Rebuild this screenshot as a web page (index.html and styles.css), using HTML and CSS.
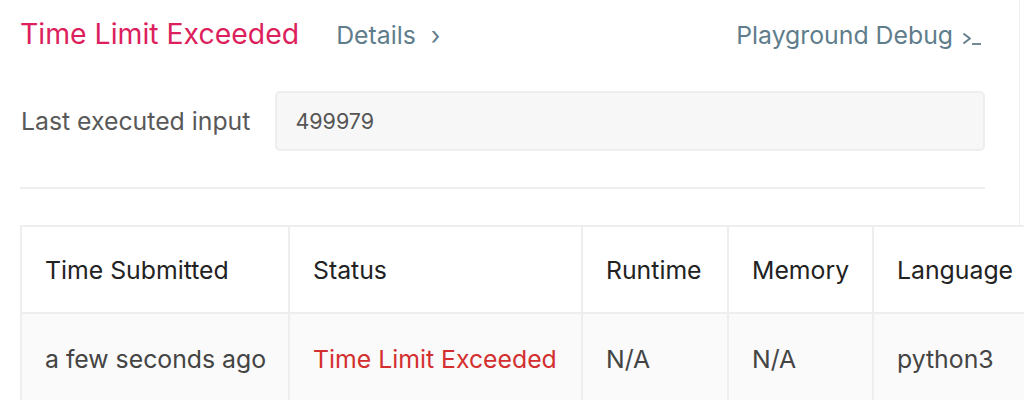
FILE: index.html
```html
<!DOCTYPE html>
<html lang="en">
<head>
<meta charset="utf-8">
<title>Submission result</title>
<link rel="stylesheet" href="styles.css">
</head>
<body>
<div class="frame">
  <div class="page">
    <div class="result-head">
      <div class="result-left">
        <span class="status-title">Time Limit Exceeded</span>
        <a class="details-link" href="#">Details <span class="chev">›</span></a>
      </div>
      <a class="playground-link" href="#">Playground Debug
        <svg class="term-icon" width="20" height="16" viewBox="0 0 20 16" aria-hidden="true">
          <polyline points="2,4 8,8.5 2,13" fill="none" stroke="currentColor" stroke-width="1.8" stroke-linecap="round" stroke-linejoin="round"/>
          <line x1="10" y1="14" x2="19" y2="14" stroke="currentColor" stroke-width="1.8"/>
        </svg>
      </a>
    </div>
    <div class="last-input">
      <span class="last-input-label">Last executed input</span>
      <div class="input-box">499979</div>
    </div>
    <hr class="divider">
    <table class="subs">
      <thead>
        <tr>
          <th class="c1">Time Submitted</th>
          <th class="c2">Status</th>
          <th class="c3">Runtime</th>
          <th class="c4">Memory</th>
          <th class="c5">Language</th>
        </tr>
      </thead>
      <tbody>
        <tr>
          <td>a few seconds ago</td>
          <td class="tle">Time Limit Exceeded</td>
          <td>N/A</td>
          <td>N/A</td>
          <td>python3</td>
        </tr>
      </tbody>
    </table>
  </div>
</div>
</body>
</html>
```
FILE: styles.css
```css
html, body {
  margin: 0;
  padding: 0;
  background: #ffffff;
  overflow: hidden;
}
body {
  font-family: Inter, "Liberation Sans", sans-serif;
  color: #333;
}
.frame {
  width: 1019px;
  height: 400px;
  border-right: 1px solid #eeeeee;
}
.page {
  width: 965px;
  padding-left: 20px;
  padding-top: 18px;
}
.result-head {
  display: flex;
  align-items: baseline;
  justify-content: space-between;
}
.result-left {
  display: flex;
  align-items: baseline;
  gap: 37px;
}
.status-title {
  font-size: 28.4px;
  line-height: 32px;
  color: #dc1f5d;
}
.details-link,
.playground-link {
  font-size: 24.8px;
  line-height: 32px;
  color: #607d8b;
  text-decoration: none;
}
.chev {
  margin-left: 8px;
}
.playground-link {
  display: flex;
  align-items: baseline;
  gap: 9px;
  margin-right: 3px;
}
.term-icon {
  align-self: center;
  position: relative;
  top: 3px;
}
.last-input {
  display: flex;
  align-items: center;
  gap: 25px;
  margin-top: 40px;
}
.last-input-label {
  font-size: 24.8px;
  color: #595959;
  padding-left: 1px;
}
.input-box {
  flex: 1;
  height: 60px;
  box-sizing: border-box;
  background: #f7f7f7;
  border: 2px solid #eeeeee;
  border-radius: 5px;
  padding: 0 18px;
  display: flex;
  align-items: center;
  font-size: 21.5px;
  color: #555;
}
.divider {
  margin: 36px 0 0 0;
  border: 0;
  height: 2px;
  background: #eeeeee;
}
.subs {
  margin-top: 36px;
  border-collapse: separate;
  border-spacing: 0;
  table-layout: fixed;
  width: 1034px;
  border-top: 2px solid #eeeeee;
  border-left: 2px solid #eeeeee;
  background: #ffffff;
}
.subs th,
.subs td {
  box-sizing: border-box;
  border-right: 2px solid #eeeeee;
  border-bottom: 2px solid #eeeeee;
  padding: 0 0 0 23px;
  text-align: left;
  vertical-align: middle;
  font-size: 24.8px;
  white-space: nowrap;
}
.subs th {
  height: 87px;
  font-weight: normal;
  color: #222;
}
.subs td {
  height: 92px;
  background: #fafafa;
  color: #444;
}
.subs .c1 { width: 268px; }
.subs .c2 { width: 293px; }
.subs .c3 { width: 146px; }
.subs .c4 { width: 145px; }
.subs .c5 { width: 180px; }
.subs .tle {
  color: #d32f2f;
}
```
